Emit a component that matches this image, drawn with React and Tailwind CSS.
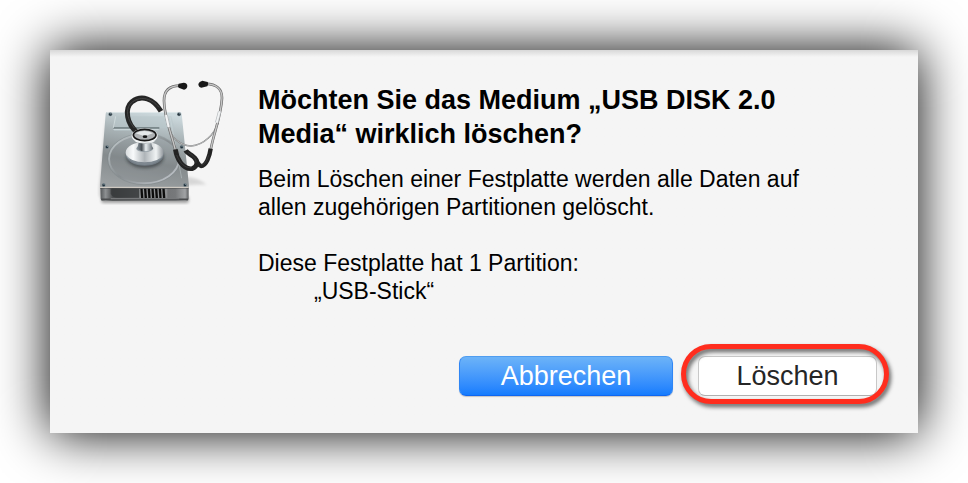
import React from 'react';

const SCREWS = [
  { cx: 61, cy: 133 },
  { cx: 267, cy: 133 },
  { cx: 51, cy: 231 },
  { cx: 275, cy: 231 },
  { cx: 41, cy: 345 },
  { cx: 285, cy: 345 },
];

const VENTS = [151, 162, 173, 184, 195, 206, 217];

const DiskIcon = () => (
  <svg viewBox="0 0 435 435" className="size-[145px] shrink-0" aria-hidden="true">
    <defs>
      <linearGradient id="plate" x1="0.6" y1="0" x2="0.4" y2="1">
        <stop offset="0" stopColor="#cddade" />
        <stop offset="0.3" stopColor="#a9b3b6" />
        <stop offset="0.65" stopColor="#858b8d" />
        <stop offset="1" stopColor="#9a9fa1" />
      </linearGradient>
      <linearGradient id="front" x1="0" y1="0" x2="1" y2="0">
        <stop offset="0" stopColor="#55585a" />
        <stop offset="0.06" stopColor="#8d9092" />
        <stop offset="0.14" stopColor="#4b4d4f" />
        <stop offset="0.45" stopColor="#68696b" />
        <stop offset="0.85" stopColor="#77797b" />
        <stop offset="0.96" stopColor="#a1a3a5" />
        <stop offset="1" stopColor="#5c5e60" />
      </linearGradient>
      <linearGradient id="groove" x1="0" y1="0" x2="1" y2="1">
        <stop offset="0" stopColor="#c5cdd0" />
        <stop offset="0.5" stopColor="#878d90" />
        <stop offset="1" stopColor="#c9cdd3" />
      </linearGradient>
      <linearGradient id="steel" x1="0" y1="0" x2="1" y2="0">
        <stop offset="0" stopColor="#d9dcde" />
        <stop offset="0.2" stopColor="#f8fafb" />
        <stop offset="0.5" stopColor="#aeb4b8" />
        <stop offset="0.8" stopColor="#f0f3f4" />
        <stop offset="1" stopColor="#8e9499" />
      </linearGradient>
      <linearGradient id="neck" x1="0" y1="0" x2="1" y2="0">
        <stop offset="0" stopColor="#8b979f" />
        <stop offset="0.3" stopColor="#4b5258" />
        <stop offset="0.55" stopColor="#e8edf0" />
        <stop offset="1" stopColor="#5c656c" />
      </linearGradient>
      <filter id="soft" x="-30%" y="-30%" width="160%" height="160%">
        <feGaussianBlur stdDeviation="5" />
      </filter>
    </defs>

    {/* ground shadow */}
    <path d="M34 380h262v14q0 5-6 5H40q-6 0-6-5z" fill="#000" opacity="0.35" filter="url(#soft)" />
    <path d="M48 140L28 350v30h18z" fill="#000" opacity="0.18" filter="url(#soft)" />
    <path d="M292 320q35 5 58 24q-20-2-58 2z" fill="#000" opacity="0.12" filter="url(#soft)" />

    {/* drive body */}
    <path d="M31 350h265v36q0 6-6 6H38q-6 0-6-6z" fill="url(#front)" />
    <path d="M62 356h86v27H82q-14 0-20-12z" fill="#303234" opacity="0.65" />
    <path d="M34 388h260" stroke="#4a4c4e" strokeWidth="5" />
    <path d="M62 386h206" stroke="#77797b" strokeWidth="4" />
    <path d="M148 356h84v28h-84z" fill="#8c8e90" />
    {VENTS.map((x) => (
      <path key={x} d={`M${x} 356h7l2 28h-7z`} fill="#0c0c0c" />
    ))}
    <path d="M51 126h219q4 0 5 5l22 216q0 6-4 6H33q-4 0-3-6l17-216q1-5 4-5z" fill="url(#plate)" />
    <path d="M51 127h219" stroke="#eef4f5" strokeWidth="2" />
    <path d="M30 352h266" stroke="#dcd5cc" strokeWidth="3" />
    <path d="M30 356h266" stroke="#3d3e3f" strokeWidth="2" opacity="0.7" />
    <path d="M76 139h168l9 36h-44l-6 8h-131z" fill="#b8c6ca" opacity="0.55" />
    <path d="M70 174h138" stroke="#697679" strokeWidth="4" />
    <path d="M70 178h136" stroke="#dce5e8" strokeWidth="2" />
    <path d="M77 139l-7 35" stroke="#dce7e9" strokeWidth="2" />
    <path d="M240 140l35 185" stroke="#d8e3e6" strokeWidth="2" opacity="0.5" />
    <ellipse cx="162" cy="267" rx="105" ry="73" fill="#788084" fillOpacity="0.18" stroke="url(#groove)" strokeWidth="6" />
    <ellipse cx="162" cy="267" rx="109" ry="77" fill="none" stroke="#747c80" strokeWidth="1" />
    {SCREWS.map((s) => (
      <g key={`${s.cx}-${s.cy}`}>
        <circle cx={s.cx} cy={s.cy} r="6" fill="#7d898f" />
        <circle cx={s.cx} cy={s.cy} r="4" fill="#22323c" />
        <circle cx={s.cx + 1} cy={s.cy - 2} r="1.5" fill="#a8bcc6" />
      </g>
    ))}

    {/* rubber tube behind the chest piece */}
    <path d="M143 188C110 164 102 116 126 95C155 73 191 86 213 124" fill="none" stroke="#262626" strokeWidth="15" />
    <path d="M133 174C107 143 107 111 127 96C155 75 187 88 207 112" fill="none" stroke="#444" strokeWidth="3" />

    {/* chest piece */}
    <ellipse cx="165" cy="262" rx="57" ry="33" fill="#1e2427" opacity="0.5" filter="url(#soft)" />
    <ellipse cx="164" cy="254" rx="57" ry="33" fill="#727c84" />
    <ellipse cx="164" cy="248" rx="57" ry="32" fill="url(#steel)" />
    <path d="M107 252q15 33 57 33t57-33q-14 25-57 25t-57-25z" fill="#7e8890" />
    <ellipse cx="164" cy="236" rx="25" ry="10" fill="#929ca3" />
    <path d="M144 205h41q-5 16 5 31q-24 16-50 0q9-15 4-31z" fill="url(#neck)" />
    <path d="M126 198q2 22 38 23t40-23z" fill="url(#steel)" />
    <ellipse cx="164" cy="197" rx="39" ry="22" fill="#eff2f3" />
    <ellipse cx="164" cy="195" rx="34" ry="17" fill="#aeb1b3" stroke="#171717" strokeWidth="5" />
    <path d="M137 190q25-14 52 0l-25 9z" fill="#e5e8e9" />
    <ellipse cx="165" cy="200" rx="7" ry="4" fill="#131313" />

    {/* spring between the ear tubes */}
    <path d="M234 165C242 204 270 226 303 228C343 226 372 192 385 158" fill="none" stroke="#777" strokeWidth="4" />
    <path d="M234 165C242 204 270 226 303 228C343 226 372 192 385 158" fill="none" stroke="#d5d8d9" strokeWidth="2" />

    {/* metal ear tubes */}
    <g fill="none">
      <path d="M270 47C234 47 222 67 222 92C222 139 243 187 256 240" stroke="#6c6c6c" strokeWidth="8" />
      <path d="M270 47C234 47 222 67 222 92C222 139 243 187 256 240" stroke="#c6c6c6" strokeWidth="4" />
      <path d="M347 41C383 43 396 58 396 84C394 135 372 187 362 239" stroke="#6c6c6c" strokeWidth="8" />
      <path d="M347 41C383 43 396 58 396 84C394 135 372 187 362 239" stroke="#c6c6c6" strokeWidth="4" />
      <path d="M228 135l8 36M389 124l-9 34" stroke="#b6babd" strokeWidth="10" />
      <path d="M228 135l8 36M389 124l-9 34" stroke="#f1f3f4" strokeWidth="6" />
    </g>
    <path d="M266 41l15-3q11 1 11 10q-1 10-10 11l-16-6q-4-6 0-12z" fill="#181818" />
    <path d="M353 36l-16-4q-10 2-12 10q0 9 9 11l18-4q5-7 1-13z" fill="#181818" />

    {/* lower rubber tubes */}
    <g fill="none" stroke="#232323" strokeLinejoin="round">
      <path d="M256 238C260 264 277 299 306 296C323 291 326 271 309 259C298 251 290 247 287 241" strokeWidth="14" />
      <path d="M362 236C359 258 349 288 333 288C325 286 324 276 315 267" strokeWidth="13" />
    </g>
    <path d="M260 255C270 281 286 295 304 293M356 256C348 279 340 286 333 284M294 247C310 258 319 266 318 278" fill="none" stroke="#444" strokeWidth="2" />
  </svg>
);

export default function App() {
  return (
    <div className="bg-white p-[50px] font-['Liberation_Sans',Arial,sans-serif] text-black">
      <div
        role="alertdialog"
        aria-labelledby="dialog-title"
        aria-describedby="dialog-text"
        className="bg-linear-to-b from-[#d8d8d8] to-[#f5f5f5] to-[7px] pt-5 pr-[41px] pb-[37px] pl-10 shadow-[0_0_50px_#000]"
      >
        <div className="flex items-start gap-[23px]">
          <DiskIcon />
          <div className="max-w-[580px] pt-[13px]">
            <h1 id="dialog-title" className="text-[27px] leading-[34px] font-bold">
              Möchten Sie das Medium „USB DISK 2.0 Media“ wirklich löschen?
            </h1>
            <div id="dialog-text" className="mt-3.5 text-[23px] leading-7">
              <p>Beim Löschen einer Festplatte werden alle Daten auf allen zugehörigen Partitionen gelöscht.</p>
              <p className="mt-7">Diese Festplatte hat 1 Partition:</p>
              <p className="pl-14">„USB-Stick“</p>
            </div>
          </div>
        </div>

        <div className="mt-[51px] flex justify-end gap-[25px] text-[27px]">
          <button
            type="button"
            className="h-10 w-[214px] rounded-[7px] border border-t-[#4f9df0] border-r-[#2f86f5] border-b-[#0f66f0] border-l-[#2f86f5] bg-linear-to-b from-[#6cb3f8] to-[#147cfe] leading-none text-white shadow-[0_1px_1px_#0003]"
          >
            Abbrechen
          </button>
          <div className="relative flex">
            <button
              type="button"
              className="h-10 w-[179px] rounded-[7px] border border-[#c8c8c8] border-b-[#b0b0b0] bg-white leading-none text-[#262626]"
            >
              Löschen
            </button>
            {/* red marker around the button */}
            <div className="pointer-events-none absolute -top-3 -right-3 -bottom-2 -left-[17px] rounded-[32px] border-5 border-[#ff2d1e] drop-shadow-[2px_3px_2px_#0009]" />
          </div>
        </div>
      </div>
    </div>
  );
}
